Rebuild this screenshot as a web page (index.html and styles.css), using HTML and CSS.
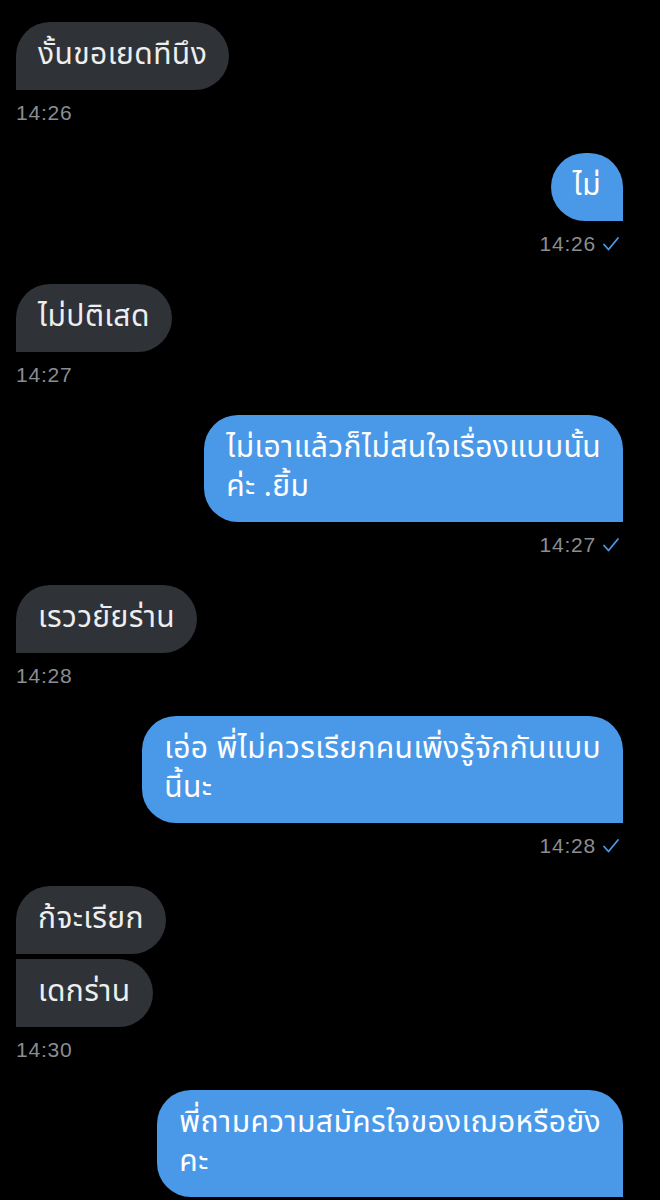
FILE: index.html
```html
<!DOCTYPE html>
<html lang="th">
<head>
<meta charset="utf-8">
<link rel="stylesheet" href="styles.css">
</head>
<body>
<div class="chat">
  <div class="group in">
    <div class="bubble">งั้นขอเยดทีนึง</div>
    <div class="time">14:26</div>
  </div>
  <div class="group out">
    <div class="bubble">ไม่</div>
    <div class="time">14:26 <svg class="check" viewBox="0 0 18 16" width="18" height="16"><path d="M2 8.5 L6.5 13.5 L16 2" fill="none" stroke="#4a99e9" stroke-width="1.8" stroke-linecap="round" stroke-linejoin="round"/></svg></div>
  </div>
  <div class="group in">
    <div class="bubble">ไม่ปติเสด</div>
    <div class="time">14:27</div>
  </div>
  <div class="group out">
    <div class="bubble">ไม่เอาแล้วก็ไม่สนใจเรื่องแบบนั้น<br>ค่ะ .ยิ้ม</div>
    <div class="time">14:27 <svg class="check" viewBox="0 0 18 16" width="18" height="16"><path d="M2 8.5 L6.5 13.5 L16 2" fill="none" stroke="#4a99e9" stroke-width="1.8" stroke-linecap="round" stroke-linejoin="round"/></svg></div>
  </div>
  <div class="group in">
    <div class="bubble">เรววยัยร่าน</div>
    <div class="time">14:28</div>
  </div>
  <div class="group out">
    <div class="bubble">เอ่อ พี่ไม่ควรเรียกคนเพิ่งรู้จักกันแบบ<br>นี้นะ</div>
    <div class="time">14:28 <svg class="check" viewBox="0 0 18 16" width="18" height="16"><path d="M2 8.5 L6.5 13.5 L16 2" fill="none" stroke="#4a99e9" stroke-width="1.8" stroke-linecap="round" stroke-linejoin="round"/></svg></div>
  </div>
  <div class="group in">
    <div class="bubble first">ก้จะเรียก</div>
    <div class="bubble next">เดกร่าน</div>
    <div class="time">14:30</div>
  </div>
  <div class="group out">
    <div class="bubble">พี่ถามความสมัครใจของเฌอหรือยัง<br>คะ</div>
  </div>
</div>
</body>
</html>
```

FILE: styles.css
```css
html, body {
  margin: 0;
  padding: 0;
  background: #000;
  height: 1200px;
  overflow: hidden;
}

.chat {
  display: flex;
  flex-direction: column;
  gap: 28px;
  padding: 22px 37px 0 16px;
}

.group {
  display: flex;
  flex-direction: column;
}

.group.in {
  align-items: flex-start;
}

.group.out {
  align-items: flex-end;
}

.bubble {
  font-family: "Noto Sans Thai", "Noto Sans Thai UI", "Noto Looped Thai", "Tlwg Typo", "Garuda", "Loma", "Noto Sans", sans-serif;
  font-size: 30px;
  line-height: 39px;
  letter-spacing: 0.4px;
  padding: 14px 22px 15px 22px;
  border-radius: 34px;
  white-space: nowrap;
}

.in .bubble {
  background: #2f3236;
  color: #eceeef;
  border-bottom-left-radius: 0;
}

.in .bubble.next {
  border-top-left-radius: 0;
  margin-top: 5px;
}

.out .bubble {
  background: #4a99e9;
  color: #fff;
  border-bottom-right-radius: 0;
}

.time {
  margin-top: 11px;
  height: 24px;
  line-height: 24px;
  font-family: "Liberation Sans", Arial, sans-serif;
  font-size: 21px;
  letter-spacing: 0.8px;
  color: #8a8d91;
  display: flex;
  align-items: center;
  gap: 6px;
}

.out .time {
  margin-right: 3px;
}

.check {
  display: block;
}
```
